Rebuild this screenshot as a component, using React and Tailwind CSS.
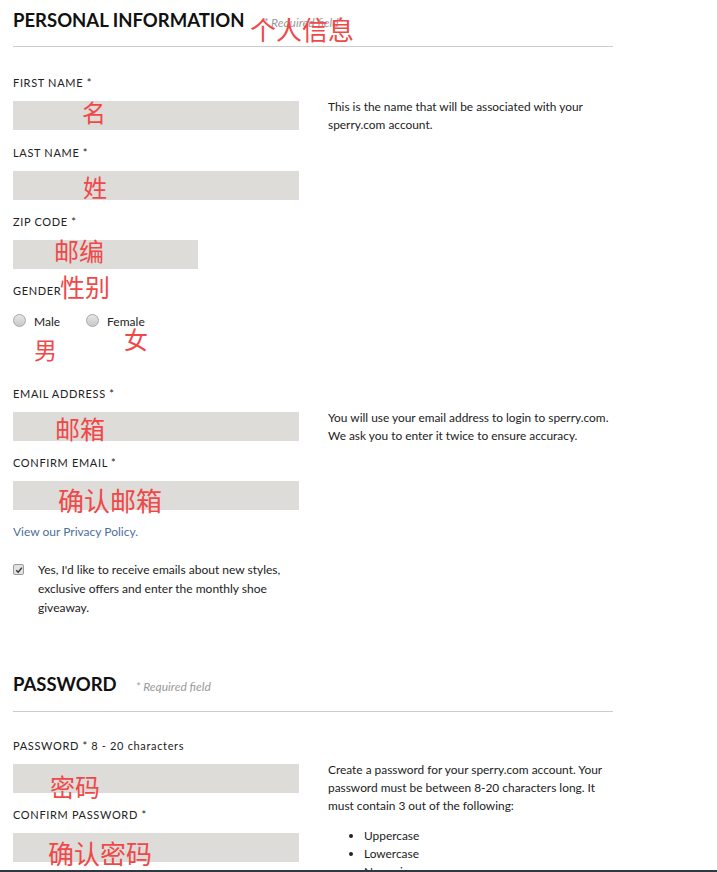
import React from "react";

const body = { fontFamily: "Lato, 'Open Sans', sans-serif" };
const cjk = { fontFamily: "'Noto Sans CJK SC', sans-serif" };

function Etiqueta({ children, className = "" }) {
  return (
    <div className={`h-4 text-[11px] leading-4 tracking-[0.06em] uppercase text-[#222] ${className}`}>
      {children}
    </div>
  );
}

function Entrada({ ancho = "w-[286px]" }) {
  return <div className={`mt-[10px] h-[29px] ${ancho} bg-[#dddcd8]`} />;
}

function Cabecera({ titulo, separacion }) {
  return (
    <div className="flex items-baseline">
      <h2 className="text-[18.5px] leading-6 font-bold text-[#111]">{titulo}</h2>
      <span className={`${separacion} text-[12px] italic text-[#999]`}>* Required field</span>
    </div>
  );
}

function Radio({ etiqueta }) {
  return (
    <label className="flex h-4 items-center">
      <span className="h-[13px] w-[13px] rounded-full border border-[#a8a8a8] bg-gradient-to-b from-[#e6e6e6] to-[#c8c8c8]" />
      <span className="ml-2 mt-[3px] text-[12px] text-[#222]">{etiqueta}</span>
    </label>
  );
}

function Nota({ texto, posicion, tamano }) {
  return (
    <span
      className="absolute whitespace-nowrap leading-none text-[#f04848]"
      style={{ ...cjk, left: posicion[0], top: posicion[1], fontSize: tamano }}
    >
      {texto}
    </span>
  );
}

export default function App() {
  return (
    <div className="relative min-h-[872px] w-full bg-white" style={body}>
      <div className="w-[613px] pl-[13px]">
        {/* Datos personales */}
        <div className="pt-2">
          <Cabecera titulo="PERSONAL INFORMATION" separacion="ml-[19px]" />
        </div>
        <div className="mt-[14px] h-px bg-[#cccccc]" />

        <div className="mt-[28px] flex">
          <div className="w-[286px]">
            <Etiqueta>First Name *</Etiqueta>
            <Entrada />
            <Etiqueta className="mt-[15px]">Last Name *</Etiqueta>
            <Entrada />
            <Etiqueta className="mt-[14px]">Zip Code *</Etiqueta>
            <Entrada ancho="w-[185px]" />
            <Etiqueta className="mt-[14px]">Gender</Etiqueta>
            <div className="mt-[13px] flex gap-[26px]">
              <Radio etiqueta="Male" />
              <Radio etiqueta="Female" />
            </div>
          </div>
          <p className="ml-[29px] w-[285px] pt-[23px] text-[11.9px] leading-[18px] text-[#222]">
            This is the name that will be associated with your sperry.com account.
          </p>
        </div>

        <div className="mt-[58px] flex">
          <div className="w-[286px]">
            <Etiqueta>Email Address *</Etiqueta>
            <Entrada />
            <Etiqueta className="mt-[14px]">Confirm Email *</Etiqueta>
            <Entrada />
            <a className="mt-[14px] block h-4 text-[12px] leading-4 text-[#4d6f9c]">
              View our Privacy Policy.
            </a>
            <label className="mt-[20px] flex">
              <span className="mt-[4px] flex h-[11px] w-[11px] shrink-0 items-center justify-center rounded-[2px] border border-[#9a9a9a] bg-[#e2e2e2]">
                <svg viewBox="0 0 10 10" className="h-[8px] w-[8px]">
                  <path d="M1.5 5.2 L4 7.8 L8.6 2" fill="none" stroke="#333" strokeWidth="1.8" />
                </svg>
              </span>
              <span className="ml-[14px] w-[255px] text-[12px] leading-[19px] text-[#222]">
                Yes, I'd like to receive emails about new styles, exclusive offers and enter the monthly shoe giveaway.
              </span>
            </label>
          </div>
          <p className="ml-[29px] w-[285px] pt-[23px] text-[11.9px] leading-[18px] text-[#222]">
            You will use your email address to login to sperry.com. We ask you to enter it twice to ensure accuracy.
          </p>
        </div>

        {/* Contraseña */}
        <div className="mt-[55px]">
          <Cabecera titulo="PASSWORD" separacion="ml-[19px]" />
        </div>
        <div className="mt-[15px] h-px bg-[#cccccc]" />

        <div className="mt-[26px] flex">
          <div className="w-[286px]">
            <Etiqueta>
              Password * 8 - 20 <span className="normal-case">characters</span>
            </Etiqueta>
            <Entrada />
            <Etiqueta className="mt-[14px]">Confirm Password *</Etiqueta>
            <Entrada />
          </div>
          <div className="ml-[29px] w-[285px] pt-[23px] text-[11.9px] leading-[18px] text-[#222]">
            <p>
              Create a password for your sperry.com account. Your password must be between 8-20 characters long. It must contain 3 out of the following:
            </p>
            <ul className="mt-3 list-disc pl-9">
              <li>Uppercase</li>
              <li>Lowercase</li>
              <li>Numeric</li>
              <li>Special characters</li>
            </ul>
          </div>
        </div>
      </div>

      <Nota texto="个人信息" posicion={[250, 16]} tamano={26} />
      <Nota texto="名" posicion={[82, 100]} tamano={24} />
      <Nota texto="姓" posicion={[83, 175]} tamano={24} />
      <Nota texto="邮编" posicion={[54, 238]} tamano={25} />
      <Nota texto="性别" posicion={[60, 274]} tamano={25} />
      <Nota texto="男" posicion={[34, 338]} tamano={23} />
      <Nota texto="女" posicion={[124, 327]} tamano={24} />
      <Nota texto="邮箱" posicion={[55, 416]} tamano={25} />
      <Nota texto="确认邮箱" posicion={[58, 487]} tamano={26} />
      <Nota texto="密码" posicion={[50, 774]} tamano={25} />
      <Nota texto="确认密码" posicion={[48, 840]} tamano={26} />

      <div className="fixed bottom-0 left-0 right-0 h-[2px] bg-[#2d3a42]" />
    </div>
  );
}
